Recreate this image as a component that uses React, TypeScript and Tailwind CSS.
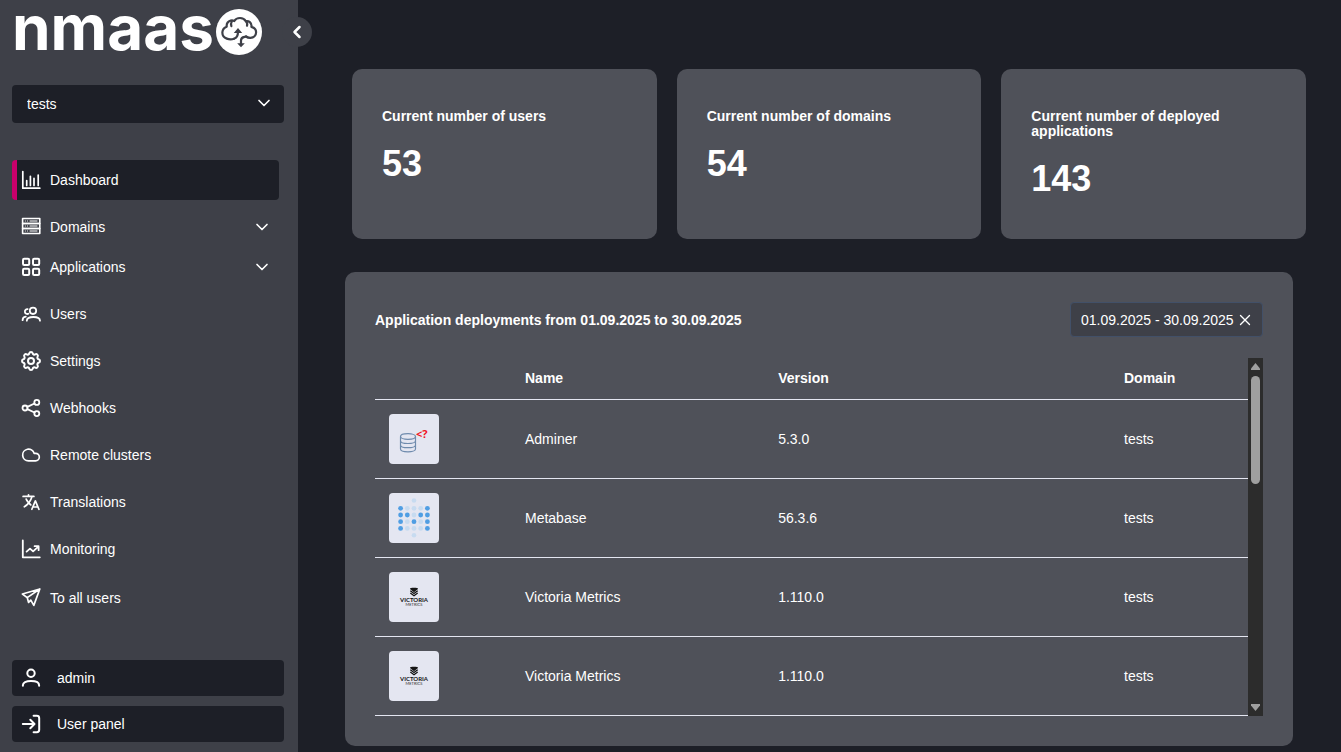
import type { ReactNode } from "react"
import { ChevronDown, ChevronLeft, Cloud, X } from "lucide-react"
import { IoLanguage } from "react-icons/io5"
import { TbSettings } from "react-icons/tb"

const Icon = ({ children, width = 2 }: { children: ReactNode; width?: number }) => (
    <svg
        viewBox="0 0 20 20"
        className="size-5 shrink-0"
        fill="none"
        stroke="currentColor"
        strokeWidth={width}
        strokeLinecap="round"
        strokeLinejoin="round"
        aria-hidden="true"
    >
        {children}
    </svg>
)

const DashboardIcon = () => (
    <Icon width={1.7}>
        <path d="M1.8 1.5v16.7h17M5.7 10.5v5M9.4 6.3v9.2M13 8.3v7.2M17.2 5v10.5" />
    </Icon>
)

const DomainsIcon = () => (
    <Icon width={1.6}>
        <rect x="1.6" y="1.5" width="17.2" height="5" />
        <rect x="1.6" y="6.5" width="17.2" height="5" />
        <rect x="1.6" y="11.5" width="17.2" height="5" />
        <path d="M4.3 4h.1M6.5 4h.1M9 4h7M4.3 9h.1M6.5 9h.1M9 9h7M4.3 14h.1M6.5 14h.1M9 14h7" strokeWidth={1} />
    </Icon>
)

const ApplicationsIcon = () => (
    <Icon>
        <rect x="2" y="1.8" width="6.2" height="6.2" rx="1.2" />
        <rect x="12" y="1.8" width="6.2" height="6.2" rx="1.2" />
        <rect x="2" y="11.8" width="6.2" height="6.2" rx="1.2" />
        <rect x="12" y="11.8" width="6.2" height="6.2" rx="1.2" />
    </Icon>
)

const UsersIcon = () => (
    <Icon width={1.8}>
        <circle cx="12" cy="6.8" r="3.2" />
        <path d="M6.6 5.2a2.4 2.4 0 1 0 .8 4.5M5.8 16.7c.1-2.4 2.6-3.7 6.6-3.7s6.5 1.3 6.6 3.7M1.6 16.2c0-2.2 1.2-3.3 3.2-3.5" />
    </Icon>
)

const WebhooksIcon = () => (
    <Icon width={1.8}>
        <circle cx="4" cy="10" r="2.5" />
        <circle cx="15.8" cy="4.4" r="2.5" />
        <circle cx="15.8" cy="15.6" r="2.5" />
        <path d="m6.3 8.9 7.2-3.4M6.3 11.1l7.2 3.4" />
    </Icon>
)

const MonitoringIcon = () => (
    <Icon width={1.8}>
        <path d="M1.8 1.5v16.8h17M5.6 12.6l3.4-3 3.1 2.8 5.2-4.8M13.6 7.2h4v4" />
    </Icon>
)

const SendIcon = () => (
    <Icon width={1.7}>
        <path d="M18.8 1 1.4 6l4.8 3.6 1.4 4.8 2.2-2.2 3 5.2zM18.8 1 6.2 9.6" />
    </Icon>
)

const AdminIcon = () => (
    <Icon>
        <circle cx="10" cy="5.3" r="3.7" />
        <path d="M1.9 17.8v-.6c0-2.6 3-4.2 8.1-4.2s8.1 1.6 8.1 4.2v.6" />
    </Icon>
)

const PanelIcon = () => (
    <Icon>
        <path d="M1.8 10h11.4M9.3 5.8l4.2 4.2-4.2 4.2M12.6 1.8h3.2a2.4 2.4 0 0 1 2.4 2.4v11.6a2.4 2.4 0 0 1-2.4 2.4h-3.2" />
    </Icon>
)

const CloudMark = () => (
    <svg viewBox="0 0 46 46" className="size-[46px] shrink-0" fill="none" aria-hidden="true">
        <circle cx="23" cy="23" r="23" fill="#fff" />
        <g stroke="#3e4048" strokeWidth="2.2" strokeLinecap="round" strokeLinejoin="round">
            <path d="M18 29.7c-2.5.9-5.1.7-7.2-.1-3-1.1-4.6-3.6-4.4-6.5.2-2.6 1.8-4.6 4.3-5.4-.3-3 1.4-5.4 4-6.1 1.5-.4 2.4-.2 3.6.4C19.5 9.8 21.7 9 24 9c2.9 0 4.7 1.2 5.8 3.2 2.6-.3 5 1 5.6 3.8.2.8.1 1.3 0 1.9 2.8.7 4.7 2.7 4.7 5.4 0 3.2-2.4 5.4-5.6 5.5-2.1.1-3.3-.4-4.5-1.3" />
            <path d="M15.8 12.5c-.9 1.4-1 3-.4 4.6M30 12.4c1.2 1.1 1.5 2.6 1 4.4" />
            <path d="M18 29.7c3-.9 4-2.9 4-7M30 27.5c-1.5.8-5 .1-5 4v4" />
        </g>
        <path d="m17.8 24 4.2-5 4.2 5zM21.2 34.2l3.8 4 3.8-4z" fill="#3e4048" />
    </svg>
)

const navItems = [
    { label: "Dashboard", icon: <DashboardIcon />, active: true },
    { label: "Domains", icon: <DomainsIcon />, expandable: true, tight: true },
    { label: "Applications", icon: <ApplicationsIcon />, expandable: true },
    { label: "Users", icon: <UsersIcon /> },
    { label: "Settings", icon: <TbSettings className="-mx-0.5 size-6" /> },
    { label: "Webhooks", icon: <WebhooksIcon /> },
    { label: "Remote clusters", icon: <Cloud className="size-5" /> },
    { label: "Translations", icon: <IoLanguage className="size-5" /> },
    { label: "Monitoring", icon: <MonitoringIcon /> },
    { label: "To all users", icon: <SendIcon />, tall: true },
]

const stats = [
    { label: "Current number of users", value: 53 },
    { label: "Current number of domains", value: 54 },
    { label: "Current number of deployed applications", value: 143 },
]

const AdminerLogo = () => (
    <svg viewBox="0 0 50 50" className="size-[50px]" aria-hidden="true">
        <g fill="none" stroke="#6f8bad" strokeWidth="1.2">
            <ellipse cx="19" cy="22.5" rx="7.5" ry="2.8" />
            <path d="M11.5 22.5V35c0 1.6 3.3 2.8 7.5 2.8s7.5-1.2 7.5-2.8V22.5M11.5 26.7c0 1.6 3.3 2.8 7.5 2.8s7.5-1.2 7.5-2.8M11.5 30.9c0 1.6 3.3 2.8 7.5 2.8s7.5-1.2 7.5-2.8" />
        </g>
        <text x="27" y="24" fontSize="11" fontWeight="700" fill="#f01424" fontFamily="Open Sans, sans-serif">
            &lt;?
        </text>
    </svg>
)

// 1 = solid dot, 0 = faded dot
const metabaseRows = ["10001", "11011", "10101", "10001"]

const MetabaseLogo = () => (
    <svg viewBox="0 0 50 50" className="size-[50px]" aria-hidden="true">
        <circle cx="25" cy="7.5" r="2.3" fill="#c7dbf0" />
        {metabaseRows.map((row, y) =>
            row.split("").map((dot, x) => (
                <circle
                    key={`${x}-${y}`}
                    cx={11.6 + x * 6.7}
                    cy={15.3 + y * 6.7}
                    r="2.4"
                    fill={dot === "1" ? "#509ee3" : "#c7dbf0"}
                />
            ))
        )}
        <circle cx="25" cy="42.3" r="2.3" fill="#c7dbf0" />
    </svg>
)

const VictoriaLogo = () => (
    <svg viewBox="0 0 50 50" className="size-[50px]" aria-hidden="true">
        <path d="M21 17c0-1 1.5-1.2 4-1.2s4 .2 4 1.2l-4 3.2z" fill="#151515" />
        <path d="M21.3 18.8 25 21.6l3.7-2.8M21.3 21 25 23.8l3.7-2.8" fill="none" stroke="#151515" strokeWidth="1.2" />
        <text x="25" y="30" textAnchor="middle" fontSize="6" fontWeight="700" fill="#151515" fontFamily="Lato, sans-serif">
            VICTORIA
        </text>
        <text x="25" y="34" textAnchor="middle" fontSize="4" fill="#333" fontFamily="Lato, sans-serif">
            METRICS
        </text>
    </svg>
)

const deployments = [
    { name: "Adminer", version: "5.3.0", domain: "tests", logo: <AdminerLogo /> },
    { name: "Metabase", version: "56.3.6", domain: "tests", logo: <MetabaseLogo /> },
    { name: "Victoria Metrics", version: "1.110.0", domain: "tests", logo: <VictoriaLogo /> },
    { name: "Victoria Metrics", version: "1.110.0", domain: "tests", logo: <VictoriaLogo /> },
]

const Sidebar = () => (
    <aside className="relative flex w-[298px] shrink-0 flex-col bg-[#3e4048] px-3 pt-[9px] pb-2.5">
        <a href="#" className="flex h-[46px] items-center gap-1">
            <span className="mb-2 w-[200px] font-['Inter',sans-serif] text-[62px] leading-[46px] font-bold">
                nmaas
            </span>
            <CloudMark />
        </a>
        <button
            type="button"
            aria-label="Collapse menu"
            className="absolute top-[17px] -right-3.5 flex size-[30px] cursor-pointer items-center justify-center rounded-full bg-[#3e4048]"
        >
            <ChevronLeft className="size-5" strokeWidth={3} />
        </button>

        <div className="relative mt-[30px] mr-0.5">
            <select
                aria-label="Domain"
                defaultValue="tests"
                className="h-[38px] w-full appearance-none rounded bg-[#1d1f27] px-[15px] outline-none"
            >
                <option value="tests">tests</option>
            </select>
            <ChevronDown className="pointer-events-none absolute top-2 right-2.5 size-5" />
        </div>

        <nav className="mt-[37px] mr-[7px]">
            <ul>
                {navItems.map(({ label, icon, active, expandable, tight, tall }) => (
                    <li key={label} className={tight ? "" : "mb-[7px]"}>
                        <a
                            href="#"
                            className={`flex items-center gap-[9px] rounded border-l-[5px] pr-[7px] pl-1 ${tall ? "h-11" : "h-10"} ${active ? "border-[#c9006b] bg-[#1d1f27]" : "border-transparent"}`}
                        >
                            {icon}
                            <span className="grow">{label}</span>
                            {expandable && <ChevronDown className="size-5" />}
                        </a>
                    </li>
                ))}
            </ul>
        </nav>

        <div className="mt-auto mr-0.5 flex flex-col gap-2.5">
            <button type="button" className="flex h-9 cursor-pointer items-center gap-4 rounded bg-[#1d1f27] px-[9px]">
                <AdminIcon />
                admin
            </button>
            <button type="button" className="flex h-9 cursor-pointer items-center gap-4 rounded bg-[#1d1f27] px-[9px]">
                <PanelIcon />
                User panel
            </button>
        </div>
    </aside>
)

const ScrollTrack = () => (
    <div className="flex w-[15px] shrink-0 flex-col items-center bg-[#2c2c2c] py-[5px]" aria-hidden="true">
        <svg viewBox="0 0 9 7" className="h-[7px] w-[9px]" fill="#9f9f9f">
            <path d="M4.5 0 9 5.5V7H0V5.5z" />
        </svg>
        <div className="mt-1.5 h-[108px] w-[9px] rounded-full bg-[#9f9f9f]" />
        <svg viewBox="0 0 9 7" className="mt-auto h-[7px] w-[9px]" fill="#9f9f9f">
            <path d="M4.5 7 0 1.5V0h9v1.5z" />
        </svg>
    </div>
)

const DeploymentsTable = () => (
    <div className="mt-[21px] flex">
        <table className="min-w-0 grow table-fixed border-collapse text-left">
            <thead>
                <tr className="h-[41px] border-b border-[#e4e6f1]">
                    <th className="w-[136px] px-3.5" aria-label="Logo" />
                    <th className="w-[29%] px-3.5">Name</th>
                    <th className="px-3.5">Version</th>
                    <th className="w-[138px] px-3.5">Domain</th>
                </tr>
            </thead>
            <tbody>
                {deployments.map((app, i) => (
                    <tr key={i} className="h-[79px] border-b border-[#e4e6f1]">
                        <td className="px-3.5">
                            <div className="size-[50px] overflow-hidden rounded bg-[#e4e6f1]">{app.logo}</div>
                        </td>
                        <td className="px-3.5">{app.name}</td>
                        <td className="px-3.5">{app.version}</td>
                        <td className="px-3.5">{app.domain}</td>
                    </tr>
                ))}
            </tbody>
        </table>
        <ScrollTrack />
    </div>
)

export default function App() {
    return (
        <div className="flex min-h-screen bg-[#1d1f27] font-['Liberation_Sans',Arial,sans-serif] text-sm text-white">
            <Sidebar />
            <main className="min-w-0 grow pt-[69px] pb-1.5">
                <section className="mr-[35px] ml-[54px] grid grid-cols-3 gap-5">
                    {stats.map(({ label, value }) => (
                        <div key={label} className="h-[170px] rounded-[10px] bg-[#4f5159] px-[30px] pt-10">
                            <h2 className="leading-[15px] font-bold">{label}</h2>
                            <p className="mt-5 text-4xl leading-[40px] font-bold">{value}</p>
                        </div>
                    ))}
                </section>

                <section className="mt-[33px] mr-12 ml-[47px] rounded-[10px] bg-[#4f5159] p-[30px]">
                    <div className="flex items-center justify-between">
                        <h2 className="font-bold">Application deployments from 01.09.2025 to 30.09.2025</h2>
                        <div className="flex h-[35px] w-[193px] items-center rounded-sm border border-[#425068] bg-[#3e4048] pr-2 pl-2.5">
                            <input
                                type="text"
                                aria-label="Date range"
                                defaultValue="01.09.2025 - 30.09.2025"
                                className="min-w-0 grow bg-transparent outline-none"
                            />
                            <button type="button" aria-label="Clear date range" className="cursor-pointer">
                                <X className="size-[18px]" strokeWidth={1.8} />
                            </button>
                        </div>
                    </div>
                    <DeploymentsTable />
                </section>
            </main>
        </div>
    )
}
